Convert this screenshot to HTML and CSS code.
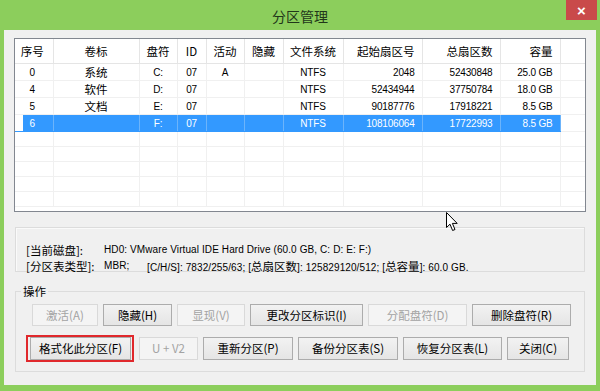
FILE: index.html
```html
<html>
<head>
  <title>分区管理</title>
  <link rel="stylesheet" href="styles.css">
</head>
<body>
  <div class="window">
    <div class="titlebar">
      <span class="title">分区管理</span>
      <span class="close">×</span>
    </div>

    <div class="client">
      <div class="list">
        <table class="grid">
          <colgroup>
            <col class="c-no"><col class="c-label"><col class="c-drive"><col class="c-id">
            <col class="c-act"><col class="c-hide"><col class="c-fs"><col class="c-start">
            <col class="c-total"><col class="c-size"><col class="c-fill">
          </colgroup>
          <thead>
            <tr>
              <th class="first">序号</th><th>卷标</th><th>盘符</th><th>ID</th><th>活动</th><th>隐藏</th>
              <th>文件系统</th><th class="r">起始扇区号</th><th class="r">总扇区数</th><th class="r">容量</th><th></th>
            </tr>
          </thead>
          <tbody>
            <tr>
              <td class="n first">0</td><td>系统</td><td class="n">C:</td><td class="n">07</td><td class="n">A</td><td></td>
              <td class="n">NTFS</td><td class="n r">2048</td><td class="n r">52430848</td><td class="n r">25.0 GB</td><td></td>
            </tr>
            <tr>
              <td class="n first">4</td><td>软件</td><td class="n">D:</td><td class="n">07</td><td></td><td></td>
              <td class="n">NTFS</td><td class="n r">52434944</td><td class="n r">37750784</td><td class="n r">18.0 GB</td><td></td>
            </tr>
            <tr>
              <td class="n first">5</td><td>文档</td><td class="n">E:</td><td class="n">07</td><td></td><td></td>
              <td class="n">NTFS</td><td class="n r">90187776</td><td class="n r">17918221</td><td class="n r">8.5 GB</td><td></td>
            </tr>
            <tr class="sel">
              <td class="n first">6</td><td></td><td class="n">F:</td><td class="n">07</td><td></td><td></td>
              <td class="n">NTFS</td><td class="n r">108106064</td><td class="n r">17722993</td><td class="n r">8.5 GB</td><td class="off"></td>
            </tr>
            <tr><td></td><td></td><td></td><td></td><td></td><td></td><td></td><td></td><td></td><td></td><td></td></tr>
            <tr><td></td><td></td><td></td><td></td><td></td><td></td><td></td><td></td><td></td><td></td><td></td></tr>
            <tr><td></td><td></td><td></td><td></td><td></td><td></td><td></td><td></td><td></td><td></td><td></td></tr>
            <tr><td></td><td></td><td></td><td></td><td></td><td></td><td></td><td></td><td></td><td></td><td></td></tr>
            <tr><td></td><td></td><td></td><td></td><td></td><td></td><td></td><td></td><td></td><td></td><td></td></tr>
          </tbody>
        </table>
      </div>

      <div class="info">
        <div class="line">
          <span class="label">[当前磁盘]:</span>
          <span>HD0: VMware Virtual IDE Hard Drive (60.0 GB, C: D: E: F:)</span>
        </div>
        <div class="line">
          <span class="label">[分区表类型]:</span>
          <span class="mbr">MBR;</span>
          <span>[C/H/S]: 7832/255/63; [<span class="zh">总扇区数</span>]: 125829120/512; [<span class="zh">总容量</span>]: 60.0 GB.</span>
        </div>
      </div>

      <fieldset class="ops">
        <legend>操作</legend>
        <div class="row row1">
          <button class="btn w66" disabled>激活(A)</button>
          <button class="btn w69">隐藏(H)</button>
          <button class="btn w68" disabled>显现(V)</button>
          <button class="btn w113">更改分区标识(I)</button>
          <button class="btn w99" disabled>分配盘符(D)</button>
          <button class="btn w99">删除盘符(R)</button>
        </div>
        <div class="row row2">
          <span class="mark"><button class="btn w101">格式化此分区(F)</button></span>
          <button class="btn w59" disabled>U + V2</button>
          <button class="btn w90">重新分区(P)</button>
          <button class="btn w100">备份分区表(S)</button>
          <button class="btn w99">恢复分区表(L)</button>
          <button class="btn w62">关闭(C)</button>
        </div>
      </fieldset>
    </div>

    <svg class="cursor" width="13" height="20" viewBox="0 0 13 20">
      <path d="M0.5 0.5 L0.5 15.5 L4 12.2 L6.6 18.5 L9 17.5 L6.4 11.4 L11.2 11.4 Z" fill="#fff" stroke="#000" stroke-width="1" stroke-linejoin="miter"/>
    </svg>
  </div>
</body>
</html>
```

FILE: styles.css
```css
body { margin: 0; background: #8cce5c; font-family: "Liberation Sans", "Noto Sans CJK SC", sans-serif; color: #000; }
.window { position: relative; width: 600px; height: 391px; }

.titlebar { height: 30px; display: flex; align-items: center; justify-content: center; }
.title { font-family: "Noto Sans CJK SC", sans-serif; font-size: 14px; color: #21361a; margin-top: 2px; }
.close { position: absolute; top: 0; right: 3px; width: 31px; height: 20px; background: #c94a4a;
  color: #fff; display: flex; align-items: center; justify-content: center; font-size: 15px; font-weight: bold; }

.client { margin: 0 4px; height: 355px; background: #f0f0f0; padding: 8px 10px 0; box-sizing: border-box; }

/* partition list */
.list { height: 174px; border: 1px solid #828790; background: #fff; box-sizing: border-box; overflow: hidden; }
.grid { width: 570px; border-collapse: collapse; table-layout: fixed;
  font-family: "Noto Sans CJK SC", sans-serif; font-size: 11.5px; }
.c-no { width: 38px; } .c-label { width: 86px; } .c-drive { width: 38px; } .c-id { width: 29px; }
.c-act { width: 38px; } .c-hide { width: 39px; } .c-fs { width: 60px; } .c-start { width: 79px; }
.c-total { width: 78px; } .c-size { width: 60px; } .c-fill { width: 25px; }
.grid th { height: 24px; padding: 1px 0 0; font-weight: normal; text-align: center; white-space: nowrap;
  border-right: 1px solid #e5e5e5; border-bottom: 1px solid #e5e5e5; }
.grid td { height: 15px; padding: 1px 0 0; line-height: 15px; text-align: center; white-space: nowrap;
  border-right: 1px solid #f0f0f0; border-bottom: 1px solid #f0f0f0; }
.grid .first { padding-right: 3px; }
.grid .n { font-family: "Liberation Sans", sans-serif; font-size: 10px; letter-spacing: -0.2px; }
.grid .r { text-align: right; padding-right: 7px; }
.grid .sel td { background: #3399ff; color: #fff; border-right-color: #6cb4fb; border-bottom-color: #3399ff; }
.grid .sel td.first { background: linear-gradient(to right, #fff 8px, #3399ff 8px); }
.grid .sel td.off { background: #fff; border-right-color: #f0f0f0; border-bottom-color: #f0f0f0; }

/* disk info */
.info { margin: 15px 1px 0; height: 45px; box-sizing: border-box; border: 1px solid #dcdcdc;
  box-shadow: inset 1px 1px #fafafa; padding: 14px 0 0 10px; font-size: 10px; line-height: 16px; letter-spacing: 0.1px; }
.line { display: flex; white-space: nowrap; }
.label { width: 78px; flex: none; font-family: "Noto Sans CJK SC", sans-serif; font-size: 11.5px; letter-spacing: 0; }
.zh { font-family: "Noto Sans CJK SC", sans-serif; font-size: 11.5px; letter-spacing: 0; }
.mbr { width: 43px; flex: none; }

/* operations */
.ops { margin: 11px 1px 0; padding: 5px 0 10px; border: 1px solid #dcdcdc; min-width: 0; }
.ops legend { padding: 0 2px; margin-left: 5px; font-family: "Noto Sans CJK SC", sans-serif; font-size: 11.5px; line-height: 16px; }
.row { display: flex; align-items: center; gap: 5px; }
.row1 { padding-left: 16px; height: 22px; }
.row2 { padding-left: 10px; height: 26px; margin-top: 9px; }
.btn { box-sizing: border-box; height: 22px; padding: 0; border: 1px solid #acacac;
  background: linear-gradient(#f2f2f2, #e5e5e5); font-family: "Noto Sans CJK SC", sans-serif;
  font-size: 11.5px; color: #000; white-space: nowrap; }
.btn:disabled { border-color: #d9d9d9; background: #f4f4f4; color: #a3a3a3; }
.row2 .btn { height: 23px; }
.mark { display: flex; border: 2px solid #e0282c; padding: 0 1px 0 2px; }
.w59 { width: 59px; } .w62 { width: 62px; } .w66 { width: 66px; } .w68 { width: 68px; } .w69 { width: 69px; }
.w90 { width: 90px; } .w99 { width: 99px; } .w100 { width: 100px; } .w101 { width: 101px; } .w113 { width: 113px; }

.cursor { position: absolute; left: 446px; top: 212px; }
```
